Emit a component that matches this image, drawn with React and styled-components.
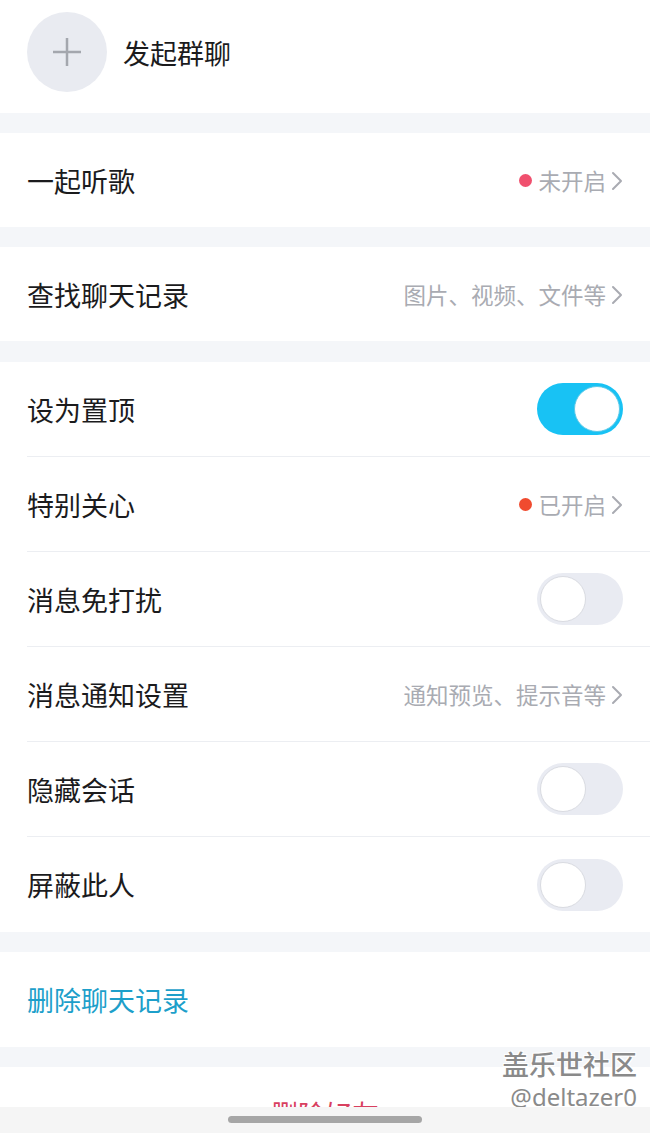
import React from "react";
import styled, { createGlobalStyle } from "styled-components";

const GlobalStyle = createGlobalStyle`
  html, body {
    margin: 0;
    padding: 0;
    background: #f4f6f9;
  }
  body {
    font-family: "Noto Sans CJK SC", "Noto Sans", sans-serif;
    -webkit-font-smoothing: antialiased;
  }
`;

const Page = styled.div`
  position: relative;
  width: 650px;
  height: 1133px;
  overflow: hidden;
  background: #f4f6f9;
  display: flex;
  flex-direction: column;
`;

const Group = styled.div`
  background: #ffffff;
  margin-bottom: ${(p) => p.$gap || 20}px;
  flex-shrink: 0;
`;

const CreateRow = styled.div`
  display: flex;
  align-items: center;
  height: 113px;
  padding-left: 27px;
  box-sizing: border-box;
  padding-bottom: 9px;
`;

const AddCircle = styled.div`
  width: 80px;
  height: 80px;
  border-radius: 50%;
  background: #e9ebf1;
  display: flex;
  align-items: center;
  justify-content: center;
  margin-right: 16px;
`;

const Row = styled.div`
  display: flex;
  align-items: center;
  height: ${(p) => p.$h || 95}px;
  margin-left: 27px;
  padding-right: 27px;
  box-sizing: border-box;
  border-bottom: ${(p) => (p.$last ? "none" : "1px solid #eceef2")};
`;

const Label = styled.div`
  flex: 1;
  font-size: 27px;
  color: ${(p) => p.$color || "#1b1b1d"};
`;

const Value = styled.div`
  display: flex;
  align-items: center;
  font-size: 22.5px;
  color: #a9abb2;
`;

const Dot = styled.span`
  width: 13px;
  height: 13px;
  border-radius: 50%;
  background: ${(p) => p.$color};
  margin-right: 6px;
`;

const Chevron = styled.svg`
  margin-left: 5px;
  margin-top: 1px;
`;

const Switch = styled.div`
  position: relative;
  width: 86px;
  height: 52px;
  border-radius: 26px;
  background: ${(p) => (p.$on ? "#18c2f4" : "#e9ebf2")};
  flex-shrink: 0;
`;

const Knob = styled.div`
  position: absolute;
  top: 3px;
  left: ${(p) => (p.$on ? "37px" : "3px")};
  width: 46px;
  height: 46px;
  border-radius: 50%;
  background: #ffffff;
  box-sizing: border-box;
  border: 1px solid ${(p) => (p.$on ? "#5cc9e8" : "#d9dbe1")};
`;

const DeleteFriend = styled.div`
  height: 40px;
  display: flex;
  align-items: flex-end;
  justify-content: center;
  font-size: 27px;
  color: #d8405f;
  overflow: hidden;
  line-height: 1;
  & span {
    transform: translateY(20px);
  }
`;

const HomeBar = styled.div`
  position: absolute;
  left: 0;
  right: 0;
  bottom: 0;
  height: 26px;
  background: #f5f5f5;
  display: flex;
  justify-content: center;
  align-items: flex-start;
`;

const Pill = styled.div`
  margin-top: 9px;
  width: 194px;
  height: 7px;
  border-radius: 4px;
  background: #a6a6a6;
`;

const Watermark = styled.div`
  position: absolute;
  right: 13px;
  bottom: 20px;
  display: flex;
  flex-direction: column;
  align-items: flex-end;
  color: #8a8a8a;
  text-shadow: 1px 1px 0 #ffffff, -1px -1px 0 #ffffff, 1px -1px 0 #ffffff,
    -1px 1px 0 #ffffff;
`;

const WmTitle = styled.div`
  font-size: 27px;
  line-height: 34px;
  font-weight: 500;
`;

const WmUser = styled.div`
  font-family: "Noto Sans", "Liberation Sans", sans-serif;
  font-size: 24px;
  line-height: 32px;
`;

const Arrow = () => (
  <Chevron width="12" height="20" viewBox="0 0 12 20">
    <path
      d="M2 2 L10 10 L2 18"
      fill="none"
      stroke="#a9abb2"
      strokeWidth="2"
      strokeLinecap="round"
      strokeLinejoin="round"
    />
  </Chevron>
);

const Toggle = ({ on }) => (
  <Switch $on={on}>
    <Knob $on={on} />
  </Switch>
);

const settings = [
  { label: "设为置顶", toggle: true, on: true },
  { label: "特别关心", value: "已开启", dot: "#f04b2f" },
  { label: "消息免打扰", toggle: true, on: false },
  { label: "消息通知设置", value: "通知预览、提示音等" },
  { label: "隐藏会话", toggle: true, on: false },
  { label: "屏蔽此人", toggle: true, on: false },
];

export default function App() {
  return (
    <>
      <GlobalStyle />
      <Page>
        <Group>
          <CreateRow>
            <AddCircle>
              <svg width="32" height="32" viewBox="0 0 32 32">
                <path
                  d="M16 2 V30 M2 16 H30"
                  stroke="#a4a7ae"
                  strokeWidth="2.5"
                />
              </svg>
            </AddCircle>
            <Label>发起群聊</Label>
          </CreateRow>
        </Group>

        <Group>
          <Row $h={94} $last>
            <Label>一起听歌</Label>
            <Value>
              <Dot $color="#f0506e" />
              未开启
              <Arrow />
            </Value>
          </Row>
        </Group>

        <Group $gap={21}>
          <Row $h={94} $last>
            <Label>查找聊天记录</Label>
            <Value>
              图片、视频、文件等
              <Arrow />
            </Value>
          </Row>
        </Group>

        <Group>
          {settings.map((s, i) => (
            <Row key={s.label} $last={i === settings.length - 1}>
              <Label>{s.label}</Label>
              {s.toggle ? (
                <Toggle on={s.on} />
              ) : (
                <Value>
                  {s.dot && <Dot $color={s.dot} />}
                  {s.value}
                  <Arrow />
                </Value>
              )}
            </Row>
          ))}
        </Group>

        <Group>
          <Row $last>
            <Label $color="#1d9fca">删除聊天记录</Label>
          </Row>
        </Group>

        <Group>
          <DeleteFriend>
            <span>删除好友</span>
          </DeleteFriend>
        </Group>

        <Watermark>
          <WmTitle>盖乐世社区</WmTitle>
          <WmUser>@deltazer0</WmUser>
        </Watermark>
        <HomeBar>
          <Pill />
        </HomeBar>
      </Page>
    </>
  );
}
